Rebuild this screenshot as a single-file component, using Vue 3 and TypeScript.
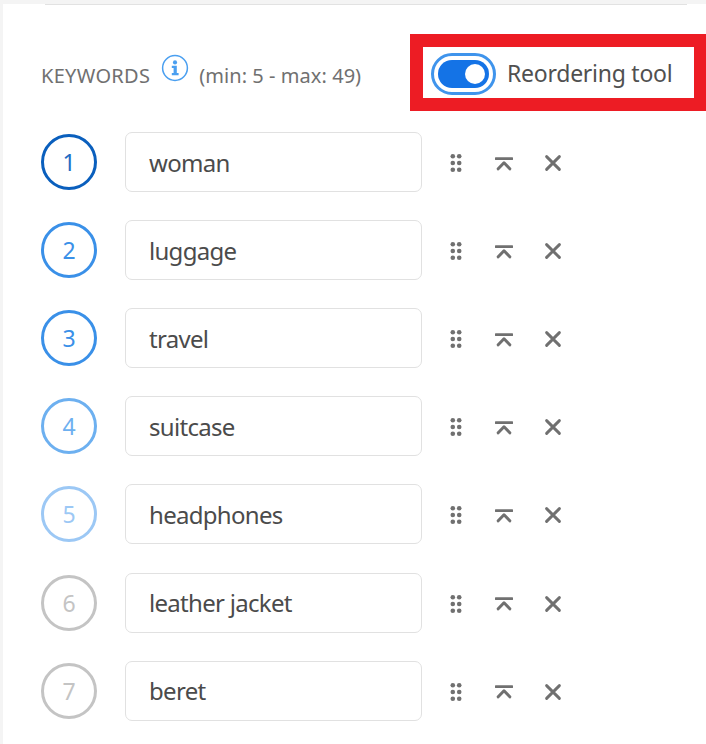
<script setup lang="ts">
interface Row { n: number; word: string; color: string; text: string }
const rows: Row[] = [
  { n: 1, word: 'woman', color: '#0a5fbd', text: '#1e6cc4' },
  { n: 2, word: 'luggage', color: '#3a90e8', text: '#3a90e8' },
  { n: 3, word: 'travel', color: '#3a90e8', text: '#3a90e8' },
  { n: 4, word: 'suitcase', color: '#6db0f0', text: '#6db0f0' },
  { n: 5, word: 'headphones', color: '#9cc8f5', text: '#9cc8f5' },
  { n: 6, word: 'leather jacket', color: '#c4c4c4', text: '#c4c4c4' },
  { n: 7, word: 'beret', color: '#c4c4c4', text: '#c4c4c4' },
]
</script>

<template>
  <div class="page">
    <div class="topline"></div>
    <div class="panel">
      <header class="head">
        <div class="title">
          <span class="label">KEYWORDS</span>
          <svg class="info" width="28" height="28" viewBox="0 0 28 28" aria-hidden="true">
            <circle cx="14" cy="14" r="12.4" fill="none" stroke="#4a9ff0" stroke-width="1.5" />
            <circle cx="14" cy="8.4" r="2.1" fill="#4a9ff0" />
            <path d="M10.8 11.8h5v7.2h1.8v2.2h-6.8V19h1.8v-5h-1.8z" fill="#4a9ff0" />
          </svg>
          <span class="range">(min: 5 - max: 49)</span>
        </div>
        <div class="callout">
          <span class="switch"><span class="track"><span class="knob"></span></span></span>
          <span class="switch-label">Reordering tool</span>
        </div>
      </header>
      <ul class="list">
        <li v-for="r in rows" :key="r.n" class="row">
          <span class="badge" :style="{ borderColor: r.color, color: r.text }">{{ r.n }}</span>
          <div class="field">{{ r.word }}</div>
          <div class="actions">
            <svg class="grip" width="14" height="20" viewBox="0 0 14 20" aria-hidden="true">
              <g fill="#707070">
                <circle cx="3.8" cy="3.2" r="2.3" /><circle cx="10.2" cy="3.2" r="2.3" />
                <circle cx="3.8" cy="10" r="2.3" /><circle cx="10.2" cy="10" r="2.3" />
                <circle cx="3.8" cy="16.8" r="2.3" /><circle cx="10.2" cy="16.8" r="2.3" />
              </g>
            </svg>
            <svg class="top" width="18" height="14" viewBox="0 0 18 14" aria-hidden="true">
              <path d="M1 1.6h16" stroke="#707070" stroke-width="2.8" stroke-linecap="round" fill="none" />
              <path d="M3.2 11.8 9 5.8l5.8 6" stroke="#707070" stroke-width="3" stroke-linecap="round" stroke-linejoin="round" fill="none" />
            </svg>
            <svg class="close" width="18" height="18" viewBox="0 0 18 18" aria-hidden="true">
              <path d="M2.6 2.6l12.8 12.8M15.4 2.6 2.6 15.4" stroke="#707070" stroke-width="2.9" stroke-linecap="round" fill="none" />
            </svg>
          </div>
        </li>
      </ul>
    </div>
  </div>
</template>

<style>
html, body { margin: 0; background: #f4f4f4; }
</style>

<style scoped>
.page {
  width: 706px;
  height: 744px;
  overflow: hidden;
  box-sizing: border-box;
  padding: 4px 0 0 3px;
  background: #f4f4f4;
  font-family: "Noto Sans", "Open Sans", sans-serif;
  position: relative;
}
.topline {
  position: absolute;
  top: 4px;
  left: 45px;
  width: 642px;
  height: 1px;
  background: #e2e2e2;
}
.panel {
  background: #fff;
  height: 100%;
  padding: 30px 0 0 38px;
  box-sizing: border-box;
}
.head {
  display: flex;
  align-items: flex-start;
  height: 77px;
}
.title {
  display: flex;
  align-items: flex-start;
  width: 369px;
  color: #707070;
  font-size: 20px;
  line-height: 24px;
}
.label {
  margin-top: 30px;
  letter-spacing: 0.3px;
}
.info {
  margin: 20px 0 0 11px;
}
.range {
  margin: 30px 0 0 10px;
  letter-spacing: 0.05px;
}
.callout {
  box-sizing: border-box;
  width: 296px;
  height: 77px;
  border: 13px solid #ed1c24;
  border-right-width: 12px;
  background: #fff;
  display: flex;
  align-items: center;
  padding-left: 8px;
  gap: 11px;
}
.switch {
  box-sizing: border-box;
  width: 65px;
  height: 42px;
  margin-top: 2px;
  border: 3px solid #3f94ec;
  border-radius: 21px;
  padding: 4px;
  background: #fff;
  display: block;
}
.track {
  display: flex;
  justify-content: flex-end;
  align-items: center;
  height: 100%;
  width: 100%;
  border-radius: 14px;
  background: #1473e6;
  padding-right: 4px;
  box-sizing: border-box;
}
.knob {
  width: 20px;
  height: 20px;
  border-radius: 50%;
  background: #fff;
}
.switch-label {
  font-size: 23px;
  letter-spacing: -0.25px;
  color: #505050;
  white-space: nowrap;
  margin-top: 1px;
}
.list {
  list-style: none;
  margin: 21px 0 0;
  padding: 0;
  display: flex;
  flex-direction: column;
  gap: 28.12px;
}
.row {
  display: flex;
  align-items: center;
  height: 60px;
}
.badge {
  box-sizing: border-box;
  width: 56px;
  height: 56px;
  border: 3px solid;
  border-radius: 50%;
  display: flex;
  align-items: center;
  justify-content: center;
  font-size: 23px;
}
.field {
  box-sizing: border-box;
  margin-left: 28px;
  width: 297px;
  height: 60px;
  border: 1px solid #e1e1e1;
  border-radius: 7px;
  padding-left: 23px;
  display: flex;
  align-items: center;
  font-size: 24px;
  letter-spacing: -0.7px;
  color: #4b4b4b;
}
.actions {
  display: flex;
  align-items: center;
  margin-left: 27px;
  padding-top: 2px;
}
.top {
  margin-left: 32px;
  margin-top: 1px;
}
.close {
  margin-left: 31px;
}
</style>
